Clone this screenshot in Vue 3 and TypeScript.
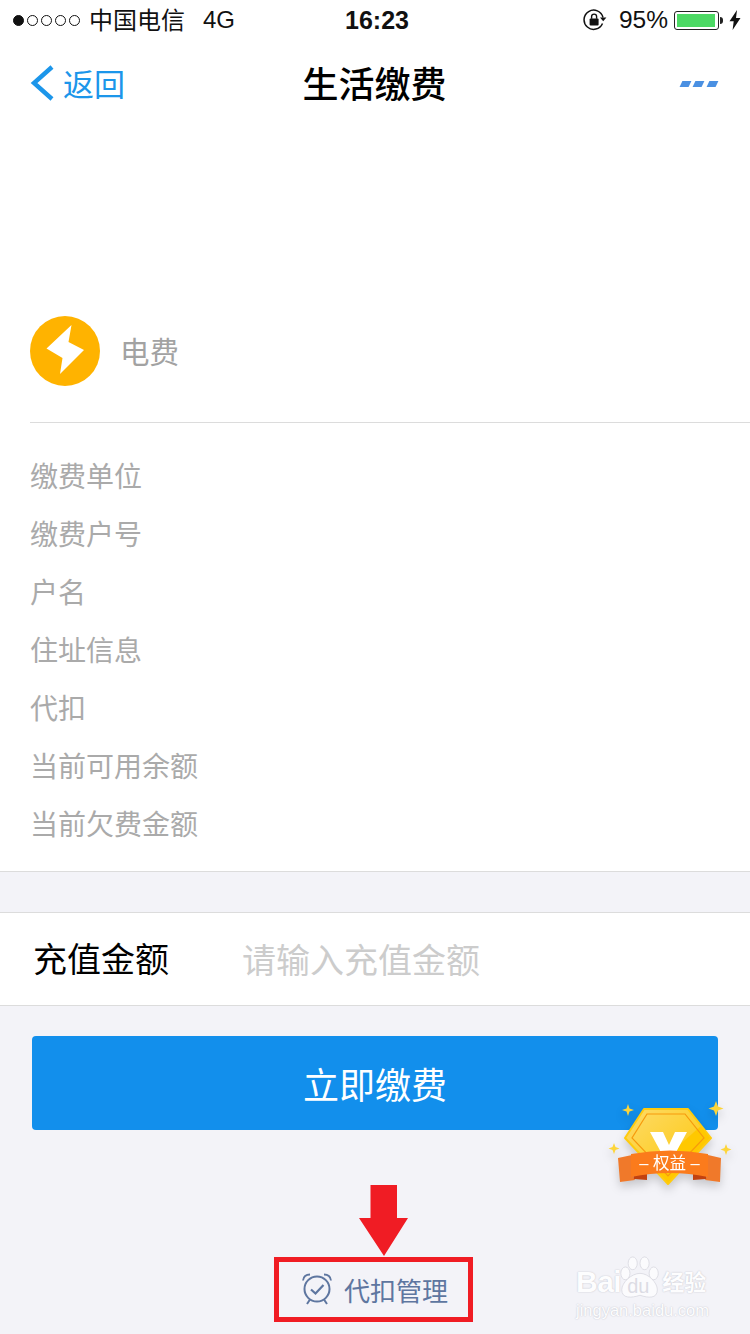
<template>
  <div class="page">
    <div class="status-bar">
      <div class="status-left">
        <span class="signal">
          <i v-for="n in 5" :key="n" class="dot" :class="{ on: n === 1 }"></i>
        </span>
        <span class="carrier">中国电信</span>
        <span class="net">4G</span>
      </div>
      <div class="time">16:23</div>
      <div class="status-right">
        <svg class="lock" width="24" height="22" viewBox="0 0 24 22">
          <path d="M19.5 14.5A9.6 9.6 0 1 1 20 8.5" fill="none" stroke="#111" stroke-width="1.5" />
          <path d="M17 8.6h6.4l-3.2 3.6z" fill="#111" />
          <rect x="6.6" y="9.6" width="9" height="7" rx="1" fill="#111" />
          <path d="M8.6 9.8V7.6a2.5 2.5 0 0 1 5 0v2.2" fill="none" stroke="#111" stroke-width="1.4" />
        </svg>
        <span class="percent">95%</span>
        <span class="battery"><span class="level"></span></span>
        <span class="nub"></span>
        <svg class="bolt" width="12" height="20" viewBox="0 0 12 20">
          <path d="M8 0 .5 11.2h4.2L3.6 20l7.9-12H7z" fill="#111" />
        </svg>
      </div>
    </div>

    <div class="nav">
      <div class="back">
        <svg width="24" height="36" viewBox="0 0 24 36">
          <path d="M22 2 4 18l18 16" fill="none" stroke="#1c96ea" stroke-width="4.4" />
        </svg>
        <span>返回</span>
      </div>
      <div class="title">生活缴费</div>
      <div class="more"><i></i><i></i><i></i></div>
    </div>

    <section class="bill">
      <div class="bill-head">
        <svg width="70" height="70" viewBox="0 0 70 70">
          <circle cx="35" cy="35" r="35" fill="#ffb300" />
          <path d="M41.500 9 16.500 32.500 32.500 42 30 58 54 34 38.500 26z" fill="#fff" />
        </svg>
        <span class="bill-name">电费</span>
      </div>
      <ul class="info">
        <li v-for="item in infoRows" :key="item">{{ item }}</li>
      </ul>
    </section>

    <form class="amount" @submit.prevent>
      <label for="amount">充值金额</label>
      <input id="amount" v-model="amount" placeholder="请输入充值金额" />
    </form>

    <button type="button" class="pay-btn">立即缴费</button>

    <div class="manage">
      <svg width="32" height="34" viewBox="0 0 32 34">
        <circle cx="15" cy="17" r="12.500" fill="none" stroke="#5e76a0" stroke-width="2" />
        <path d="M9 17.500 13.500 21.500 21.500 13" fill="none" stroke="#5e76a0" stroke-width="2.200" />
        <path d="M1 8.500C1.500 4.500 4.500 2.500 8 2.500M29 8.500C28.500 4.500 25.500 2.500 22 2.500" fill="none" stroke="#5e76a0" stroke-width="1.800" />
        <path d="M8 27.500 5 32M22 27.500l3 4.500" fill="none" stroke="#5e76a0" stroke-width="2" />
      </svg>
      <span>代扣管理</span>
    </div>

    <!-- floating badge over the button -->
    <svg class="badge" width="150" height="110" viewBox="0 0 150 110">
      <defs>
        <linearGradient id="gold" x1="0" y1="0" x2="1" y2="1">
          <stop offset="0" stop-color="#fddb6a" />
          <stop offset="0.55" stop-color="#fdcf2e" />
          <stop offset="0.56" stop-color="#ffc800" />
          <stop offset="1" stop-color="#ffc800" />
        </linearGradient>
      </defs>
      <path d="M44 19H88L111 48 68 94 25 48z" fill="url(#gold)" stroke="#ffcb0e" stroke-width="2" stroke-linejoin="round" />
      <path d="M47 24H85L104 48 68 86 32 48z" fill="none" stroke="#f79a0c" stroke-width="1.200" />
      <path d="M50 42H63L69 55 75 42H87L74 66H63z" fill="#fff" />
      <path d="M18 68 32 65V84L35 90 20 92z" fill="#f0792a" />
      <path d="M121 68 108 65V84L105 90 120 92z" fill="#f0792a" />
      <path d="M33 84 47 83 47 90 34 89zM107 84 93 83 93 90 106 89z" fill="#c2410f" />
      <path d="M31 64Q70 57 108 64V87Q70 79 31 87z" fill="#fb7b1c" />
      <text x="69.500" y="79" text-anchor="middle" class="badge-text">– 权益 –</text>
      <path d="M28 14l1.500 4.500 4.500 1.500-4.500 1.500L28 26l-1.500-4.500L22 20l4.500-1.500zM116 11l2 5.500 5.500 2-5.500 2-2 5.500-2-5.500-5.500-2 5.500-2zM14 53l1.500 4 4 1.500-4 1.500-1.500 4-1.500-4-4-1.500 4-1.500zM126 54l1.500 4 4 1.500-4 1.500-1.500 4-1.500-4-4-1.500 4-1.500z" fill="#fdd53a" />
    </svg>

    <!-- annotation drawn on the screenshot -->
    <svg class="arrow" width="50" height="71" viewBox="0 0 50 71">
      <path d="M11.500 0H38V33H49L25 71 0 33H11.500z" fill="#f01c24" />
    </svg>
    <div class="mark"></div>

    <div class="watermark">
      <div class="wm-top">
        <span class="wm-bai">Bai</span>
        <span class="wm-du">
          <svg width="42" height="46" viewBox="0 0 46 48">
            <ellipse cx="7" cy="20" rx="5" ry="7" />
            <ellipse cx="15" cy="9" rx="5" ry="7" />
            <ellipse cx="28" cy="9" rx="5" ry="7" />
            <ellipse cx="38" cy="20" rx="5" ry="7" />
            <path d="M23 20C32 20 42 30 42 38 42 48 32 47 23 44 14 47 3 48 3 38 3 30 14 20 23 20z" />
          </svg>
          <em>du</em>
        </span>
        <span class="wm-cn">经验</span>
      </div>
      <div class="wm-url">jingyan.baidu.com</div>
    </div>
  </div>
</template>

<script setup lang="ts">
import { ref } from 'vue';

const amount = ref('');

const infoRows: string[] = [
  '缴费单位',
  '缴费户号',
  '户名',
  '住址信息',
  '代扣',
  '当前可用余额',
  '当前欠费金额',
];
</script>

<style>
body {
  background: #f3f3f8;
}
</style>

<style scoped>
.page {
  position: relative;
  width: 750px;
  height: 1334px;
  overflow: hidden;
  background: #f3f3f8;
  font-family: "Liberation Sans", "Noto Sans CJK SC", sans-serif;
  color: #000;
}

.status-bar {
  display: grid;
  grid-template-columns: 1fr auto 1fr;
  align-items: center;
  height: 40px;
  padding: 0 9px 0 13px;
  background: #fff;
  font-size: 24px;
  color: #111;
}

.status-left,
.status-right {
  display: flex;
  align-items: center;
}

.status-right {
  justify-content: flex-end;
}

.signal {
  display: flex;
  gap: 3px;
  margin-right: 9px;
}

.dot {
  width: 11px;
  height: 11px;
  box-sizing: border-box;
  border: 1px solid #111;
  border-radius: 50%;
}

.dot.on {
  background: #111;
}

.carrier {
  margin-bottom: 4px;
}

.net {
  margin-left: 18px;
}

.time {
  font-size: 25px;
  font-weight: 700;
  margin-left: 0;
}

.percent {
  margin-left: 12px;
  font-size: 24.500px;
}

.battery {
  display: block;
  width: 45px;
  height: 19px;
  box-sizing: border-box;
  margin-left: 6px;
  padding: 2px;
  border: 1px solid #222;
  border-radius: 3px;
}

.level {
  display: block;
  width: 38px;
  height: 13px;
  background: #4cd964;
}

.nub {
  width: 3px;
  height: 7px;
  margin-left: 1px;
  border-radius: 0 3px 3px 0;
  background: #222;
}

.bolt {
  margin-left: 6px;
}

.nav {
  display: grid;
  grid-template-columns: 1fr auto 1fr;
  align-items: center;
  height: 88px;
  box-sizing: border-box;
  padding: 0 34px 4px 30px;
  background: #fff;
}

.back {
  display: flex;
  align-items: center;
  gap: 9px;
  font-size: 31px;
  color: #1c96ea;
}

.back svg {
  margin-top: 2px;
}

.title {
  font-size: 36px;
  font-weight: 500;
  margin-left: 3px;
}

.more {
  display: flex;
  justify-content: flex-end;
  gap: 5px;
  margin-top: 4px;
}

.more i {
  display: block;
  width: 8.500px;
  height: 6px;
  background: #4a90e2;
  transform: skewX(-25deg);
}

.bill {
  padding: 188px 0 16px 30px;
  background: #fff;
  border-bottom: 1px solid #dcdcdc;
}

.bill-head {
  display: flex;
  align-items: center;
  gap: 20px;
  padding-bottom: 36px;
  border-bottom: 1px solid #dcdcdc;
}

.bill-name {
  font-size: 29.500px;
  color: #a2a2a2;
  margin-bottom: 2px;
}

.info {
  list-style: none;
  margin: 0;
  padding: 26px 0 0;
}

.info li {
  height: 58px;
  line-height: 58px;
  font-size: 28px;
  color: #aaa;
}

.amount {
  display: flex;
  align-items: center;
  height: 92px;
  margin-top: 40px;
  padding-left: 33px;
  background: #fff;
  border-top: 1px solid #dcdcdc;
  border-bottom: 1px solid #dcdcdc;
}

.amount label {
  width: 210px;
  font-size: 34px;
  margin-bottom: 4px;
}

.amount input {
  flex: 1;
  min-width: 0;
  height: 48px;
  margin-top: 4px;
  margin-left: -1px;
  padding: 0;
  border: none;
  outline: none;
  background: transparent;
  font-family: inherit;
  font-size: 34px;
}

.amount input::placeholder {
  color: #ccc;
  opacity: 1;
}

.pay-btn {
  display: block;
  width: 686px;
  height: 94px;
  margin: 30px 0 0 32px;
  padding: 0;
  border: none;
  border-radius: 4px;
  background: #128fec;
  color: #fff;
  font-family: inherit;
  font-size: 36px;
  cursor: pointer;
}

.manage {
  display: flex;
  justify-content: center;
  align-items: center;
  gap: 10px;
  height: 40px;
  margin-top: 139px;
  font-size: 26px;
  color: #5e76a0;
}

.badge {
  position: absolute;
  left: 600px;
  top: 1090px;
  filter: drop-shadow(0 5px 5px rgba(0, 0, 0, 0.18));
}

.badge-text {
  fill: #fff;
  font-size: 16.500px;
}

.arrow {
  position: absolute;
  left: 359px;
  top: 1185px;
}

.mark {
  position: absolute;
  left: 274px;
  top: 1257px;
  width: 199px;
  height: 65px;
  box-sizing: border-box;
  border: 5px solid #f01c24;
}

.watermark {
  position: absolute;
  left: 576px;
  top: 1252px;
  width: 134px;
  color: #fdfdfe;
  text-shadow: 0 0 1.500px #b8b8c2;
}

.wm-top {
  display: flex;
  align-items: flex-end;
  height: 48px;
}

.wm-bai {
  font-size: 30px;
  font-weight: 700;
  line-height: 36px;
  letter-spacing: -0.500px;
}

.wm-du {
  position: relative;
  margin-left: -2px;
  height: 46px;
}

.wm-du svg {
  display: block;
  fill: #fbfbfd;
  stroke: #d4d4dc;
  stroke-width: 0.800;
}

.wm-du em {
  position: absolute;
  left: 8px;
  top: 20px;
  font-style: normal;
  font-size: 20px;
  line-height: 24px;
  color: #dcdce4;
  text-shadow: none;
}

.wm-cn {
  margin-left: 1px;
  font-size: 22px;
  font-weight: 700;
  line-height: 34px;
}

.wm-url {
  font-size: 16.500px;
  line-height: 20px;
  white-space: nowrap;
}
</style>
